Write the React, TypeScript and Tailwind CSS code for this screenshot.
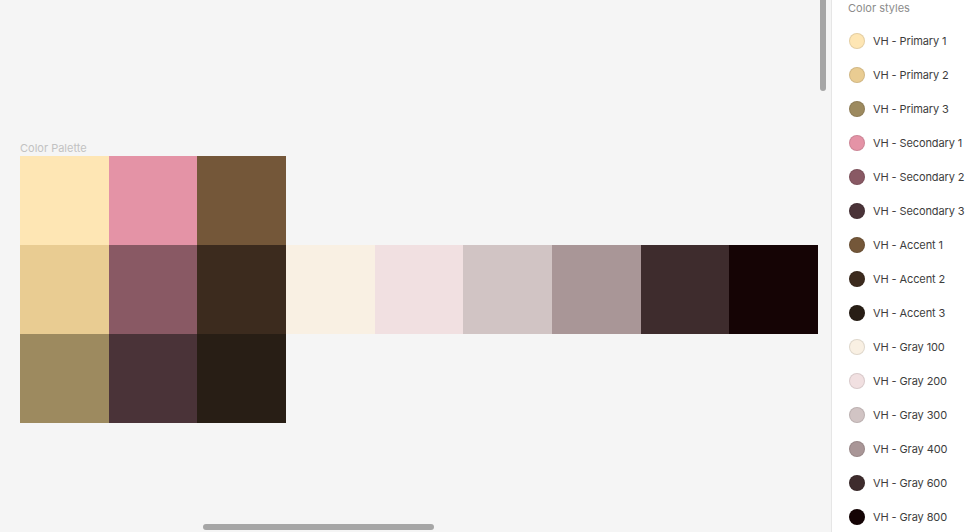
const styles = [
  { name: "VH - Primary 1", color: "#FEE6B4" },
  { name: "VH - Primary 2", color: "#E9CC92" },
  { name: "VH - Primary 3", color: "#9D8A5F" },
  { name: "VH - Secondary 1", color: "#E493A6" },
  { name: "VH - Secondary 2", color: "#895964" },
  { name: "VH - Secondary 3", color: "#4A3338" },
  { name: "VH - Accent 1", color: "#745739" },
  { name: "VH - Accent 2", color: "#3C2B1E" },
  { name: "VH - Accent 3", color: "#281E15" },
  { name: "VH - Gray 100", color: "#F9F0E3" },
  { name: "VH - Gray 200", color: "#F1E0E1" },
  { name: "VH - Gray 300", color: "#D1C4C4" },
  { name: "VH - Gray 400", color: "#A99697" },
  { name: "VH - Gray 600", color: "#3E2C2D" },
  { name: "VH - Gray 800", color: "#150405" },
];

const rows = [
  ["#FEE6B4", "#E493A6", "#745739"],
  ["#E9CC92", "#895964", "#3C2B1E", "#F9F0E3", "#F1E0E1", "#D1C4C4", "#A99697", "#3E2C2D", "#150405"],
  ["#9D8A5F", "#4A3338", "#281E15"],
];

export default function App() {
  return (
    <div
      className="flex h-[532px] w-[973px] overflow-hidden bg-[#f5f5f5]"
      style={{ fontFamily: "Inter, 'Noto Sans', sans-serif" }}
    >
      {/* Canvas */}
      <div className="relative flex-1 pl-[20px] pt-[142px]">
        <div className="h-[14px] text-[11px] leading-[13px] text-[#c2c2c2]">Color Palette</div>
        <div className="flex flex-col">
          {rows.map((row, i) => (
            <div key={i} className="flex h-[89px]">
              {row.map((c, j) => (
                <div key={j} className="h-full w-[88.67px]" style={{ backgroundColor: c }} />
              ))}
            </div>
          ))}
        </div>

        {/* scrollbars */}
        <div className="absolute right-[5px] top-0 h-[91px] w-[6px] rounded-b-full bg-[#a6a6a6]" />
        <div className="absolute bottom-[2px] left-[203px] h-[6px] w-[231px] rounded-full bg-[#a6a6a6]" />
      </div>

      {/* Right panel */}
      <div className="w-[142px] shrink-0 border-l border-[#e6e6e6] bg-white pl-[16px]">
        <div className="h-[24px] pt-[1px] text-[11px] leading-[14px] text-[#8c8c8c]">Color styles</div>
        {styles.map((s) => (
          <div key={s.name} className="flex h-[34px] items-center gap-[8px] pl-[1px]">
            <span
              className="h-[16px] w-[16px] shrink-0 rounded-full border border-black/10"
              style={{ backgroundColor: s.color }}
            />
            <span className="whitespace-nowrap text-[11px] tracking-[-0.1px] text-[#3d3d3d]">{s.name}</span>
          </div>
        ))}
      </div>
    </div>
  );
}
